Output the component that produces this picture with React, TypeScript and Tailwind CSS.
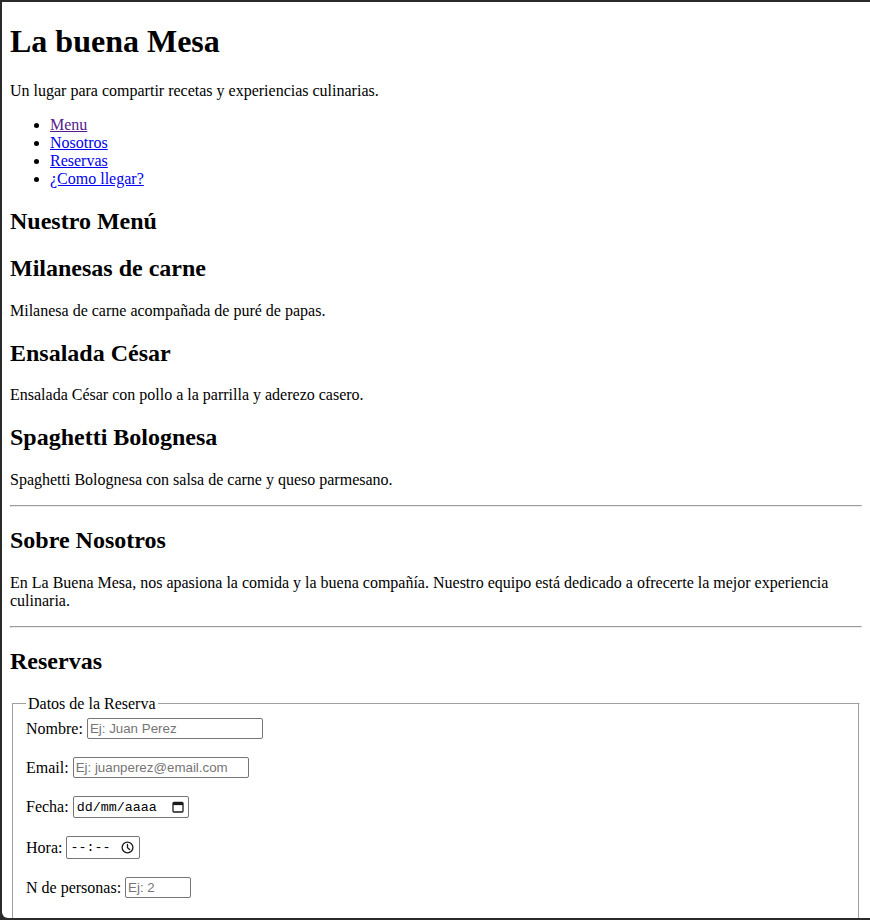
import React from "react";

function CalendarIcon() {
  return (
    <svg width="12" height="12" viewBox="0 0 12 12" className="block">
      <rect x="1" y="1.5" width="10" height="9.5" rx="1" fill="none" stroke="#1a1a1a" strokeWidth="1.3" />
      <rect x="1" y="1.5" width="10" height="2.6" fill="#1a1a1a" />
    </svg>
  );
}

function ClockIcon() {
  return (
    <svg width="13" height="13" viewBox="0 0 13 13" className="block">
      <circle cx="6.5" cy="6.5" r="5.4" fill="none" stroke="#1a1a1a" strokeWidth="1.3" />
      <path d="M6.5 3.4 V6.7 L8.6 8.6" fill="none" stroke="#1a1a1a" strokeWidth="1.3" strokeLinecap="round" />
    </svg>
  );
}

const inputCls =
  "block border border-[#767676] rounded-[2px] px-[2px] py-[1px] font-['Liberation_Sans',Arial,sans-serif] text-[13.333px] leading-[normal] text-black placeholder:text-[#757575] bg-white outline-none";

const hrCls =
  "h-0 my-2 border border-t-[#9a9a9a] border-l-[#9a9a9a] border-b-[#eeeeee] border-r-[#eeeeee]";

export default function App() {
  return (
    <div className="h-[920px] overflow-hidden bg-[#2b2b2b] pt-[2px] pl-[2px] pb-[2px]">
      <div className="flow-root h-full overflow-hidden bg-white rounded-bl-[6px] font-['Liberation_Serif','Times_New_Roman',serif] text-[16px] leading-[normal] text-black">
        <div className="mx-2">
          <h1 className="text-[32px] font-bold my-[21.44px]">La buena Mesa</h1>
          <p className="my-4">Un lugar para compartir recetas y experiencias culinarias.</p>
          <ul className="my-4 pl-10 list-disc">
            <li><a href="#menu" className="underline text-[#551A8B]">Menu</a></li>
            <li><a href="#nosotros" className="underline text-[#0000EE]">Nosotros</a></li>
            <li><a href="#reservas" className="underline text-[#0000EE]">Reservas</a></li>
            <li><a href="#llegar" className="underline text-[#0000EE]">¿Como llegar?</a></li>
          </ul>

          <h2 className="text-[24px] font-bold my-[19.92px]">Nuestro Menú</h2>
          <h2 className="text-[24px] font-bold my-[19.92px]">Milanesas de carne</h2>
          <p className="my-4">Milanesa de carne acompañada de puré de papas.</p>
          <h2 className="text-[24px] font-bold my-[19.92px]">Ensalada César</h2>
          <p className="my-4">Ensalada César con pollo a la parrilla y aderezo casero.</p>
          <h2 className="text-[24px] font-bold my-[19.92px]">Spaghetti Bolognesa</h2>
          <p className="my-4">Spaghetti Bolognesa con salsa de carne y queso parmesano.</p>

          <hr className={hrCls} />

          <h2 className="text-[24px] font-bold my-[19.92px]">Sobre Nosotros</h2>
          <p className="my-4">
            En La Buena Mesa, nos apasiona la comida y la buena compañía. Nuestro equipo está dedicado a ofrecerte la mejor experiencia culinaria.
          </p>

          <hr className={hrCls} />

          <h2 className="text-[24px] font-bold my-[19.92px]">Reservas</h2>

          <fieldset className="mx-[2px] pt-[5.6px] px-[13px] pb-[60px] border border-t-[#a0a0a0] border-l-[#a0a0a0] border-r-white border-b-white shadow-[inset_-1px_-1px_0_#a0a0a0]">
            <legend className="px-[2px]">Datos de la Reserva</legend>
            <div className="flex flex-col gap-[18px]">
              <div className="flex items-center gap-[4px] h-[21px]">
                <span>Nombre:</span>
                <input className={inputCls + " w-[176px] h-[21px]"} placeholder="Ej: Juan Perez" />
              </div>
              <div className="flex items-center gap-[4px] h-[21px]">
                <span>Email:</span>
                <input className={inputCls + " w-[176px] h-[21px]"} placeholder="Ej: juanperez@email.com" />
              </div>
              <div className="flex items-center gap-[4px] h-[22px]">
                <span>Fecha:</span>
                <div className="flex items-center justify-between w-[116px] h-[22px] border border-[#767676] rounded-[2px] pl-[3px] pr-[4px] font-['Liberation_Mono','Courier_New',monospace] text-[13.333px] leading-none text-black">
                  <span>dd/mm/aaaa</span>
                  <CalendarIcon />
                </div>
              </div>
              <div className="flex items-center gap-[4px] h-[23px]">
                <span>Hora:</span>
                <div className="flex items-center justify-between w-[74px] h-[23px] border border-[#767676] rounded-[2px] pl-[3px] pr-[5px] font-['Liberation_Mono','Courier_New',monospace] text-[13.333px] leading-none text-black">
                  <span>--:--</span>
                  <ClockIcon />
                </div>
              </div>
              <div className="flex items-center gap-[4px] h-[21px]">
                <span>N de personas:</span>
                <input className={inputCls + " w-[66px] h-[21px]"} placeholder="Ej: 2" />
              </div>
            </div>
          </fieldset>
        </div>
      </div>
    </div>
  );
}
